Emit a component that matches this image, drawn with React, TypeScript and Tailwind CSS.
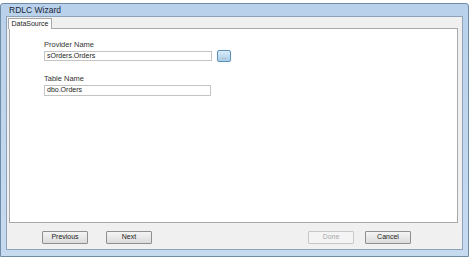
import React from "react";

const font = { fontFamily: '"Liberation Sans", Arial, sans-serif' };

function Btn({ label, disabled }: { label: string; disabled?: boolean }) {
  return (
    <div
      className={
        "w-[46px] h-[13px] flex items-center justify-center text-[7px] border rounded-[1px] " +
        (disabled
          ? "border-[#c8c8c8] bg-[#f4f4f4] text-[#a8a8a8]"
          : "border-[#8f8f8f] bg-gradient-to-b from-[#f4f4f4] to-[#dcdcdc] text-[#222]")
      }
    >
      {label}
    </div>
  );
}

export default function App() {
  return (
    <div className="w-[469px] h-[257px] bg-white flex flex-col overflow-hidden" style={font}>
      <div className="h-[3px] bg-white shrink-0" />
      <div className="flex-1 flex flex-col bg-gradient-to-b from-[#b9d1ea] to-[#c6dbf0] border border-[#6f8ca8] rounded-t-[3px] px-[5px] pb-[6px]">
        <div className="h-[12px] flex items-center pl-[3px] text-[8.5px] text-[#1a2638] shrink-0">RDLC Wizard</div>
        <div className="flex-1 flex flex-col bg-[#f0f0f0] border border-[#8ea3ba] px-[1px] pt-[1px]">
          <div className="flex h-[11px] shrink-0">
            <div className="w-[44px] h-[11px] bg-white border border-b-0 border-[#a9a9a9] text-[7px] flex items-center justify-center text-[#222]">
              DataSource
            </div>
            <div className="flex-1 border-b border-[#a9a9a9] mr-[3px]" />
          </div>
          <div className="h-[194px] bg-white border border-t-0 border-[#a9a9a9] ml-[1px] mr-[3px] shrink-0 pl-[34px] pt-[12px]">
            <div className="text-[7.5px] text-[#333] leading-[8px]">Provider Name</div>
            <div className="flex items-start mt-[2px]">
              <div className="w-[168px] h-[10px] border border-[#c4c4c4] text-[7px] text-[#222] pl-[2px] flex items-center">
                sOrders.Orders
              </div>
              <div className="ml-[5px] -mt-[1px] w-[14px] h-[12px] rounded-[2px] border border-[#5b8fb8] bg-gradient-to-b from-[#d8ecf8] to-[#a9cfe9] flex items-end justify-center text-[6px] text-[#c05050] leading-[8px]">
                ...
              </div>
            </div>
            <div className="text-[7.5px] text-[#333] leading-[8px] mt-[13px]">Table Name</div>
            <div className="w-[167px] h-[11px] border border-[#c4c4c4] text-[7px] text-[#222] pl-[2px] flex items-center mt-[2px]">
              dbo.Orders
            </div>
          </div>
          <div className="flex-1 flex items-center pt-[2px] pl-[34px] pr-[50px]">
            <Btn label="Previous" />
            <div className="w-[18px]" />
            <Btn label="Next" />
            <div className="flex-1" />
            <Btn label="Done" disabled />
            <div className="w-[11px]" />
            <Btn label="Cancel" />
          </div>
        </div>
      </div>
    </div>
  );
}
